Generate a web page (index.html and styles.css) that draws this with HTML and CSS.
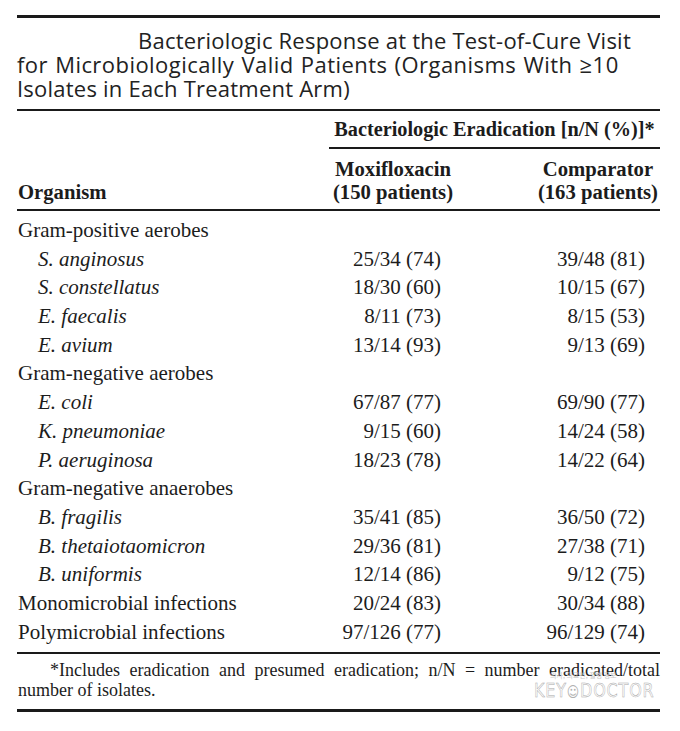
FILE: index.html
```html
<!DOCTYPE html>
<html lang="en">
<head>
<meta charset="utf-8">
<title>Bacteriologic Response</title>
<link rel="stylesheet" href="styles.css">
</head>
<body>
<div class="page">
  <div class="title"><span class="t1">Bacteriologic Response at the Test-of-Cure Visit</span><br><span class="t2">for Microbiologically Valid Patients (Organisms With ≥10</span><br><span class="t3">Isolates in Each Treatment Arm)</span></div>

  <div class="thead">
    <div class="spanner">Bacteriologic Eradication [n/N (%)]*</div>
    <div class="colhead org">Organism</div>
    <div class="colhead c2"><div>Moxifloxacin<br>(150 patients)</div></div>
    <div class="colhead c3"><div>Comparator<br>(163 patients)</div></div>
  </div>

  <div class="tbody">
    <div class="lbl">Gram-positive aerobes</div><div class="num"></div><div class="num n3"></div>
    <div class="lbl sp">S. anginosus</div><div class="num">25/34 (74)</div><div class="num n3">39/48 (81)</div>
    <div class="lbl sp">S. constellatus</div><div class="num">18/30 (60)</div><div class="num n3">10/15 (67)</div>
    <div class="lbl sp">E. faecalis</div><div class="num">8/11 (73)</div><div class="num n3">8/15 (53)</div>
    <div class="lbl sp">E. avium</div><div class="num">13/14 (93)</div><div class="num n3">9/13 (69)</div>
    <div class="lbl">Gram-negative aerobes</div><div class="num"></div><div class="num n3"></div>
    <div class="lbl sp">E. coli</div><div class="num">67/87 (77)</div><div class="num n3">69/90 (77)</div>
    <div class="lbl sp">K. pneumoniae</div><div class="num">9/15 (60)</div><div class="num n3">14/24 (58)</div>
    <div class="lbl sp">P. aeruginosa</div><div class="num">18/23 (78)</div><div class="num n3">14/22 (64)</div>
    <div class="lbl">Gram-negative anaerobes</div><div class="num"></div><div class="num n3"></div>
    <div class="lbl sp">B. fragilis</div><div class="num">35/41 (85)</div><div class="num n3">36/50 (72)</div>
    <div class="lbl sp">B. thetaiotaomicron</div><div class="num">29/36 (81)</div><div class="num n3">27/38 (71)</div>
    <div class="lbl sp">B. uniformis</div><div class="num">12/14 (86)</div><div class="num n3">9/12 (75)</div>
    <div class="lbl">Monomicrobial infections</div><div class="num">20/24 (83)</div><div class="num n3">30/34 (88)</div>
    <div class="lbl">Polymicrobial infections</div><div class="num">97/126 (77)</div><div class="num n3">96/129 (74)</div>
  </div>

  <div class="foot">
    <div class="fn1">*Includes eradication and presumed eradication; n/N = number eradicated/total</div>
    <div class="fn2">number of isolates.</div>
    <div class="wm">
      <div class="wm-ko">의사, 의료인, 질병 정보</div>
      <div class="wm-logo">KEY<span class="wm-face">☺</span>DOCTOR</div>
    </div>
  </div>
</div>
</body>
</html>
```

FILE: styles.css
```css
html, body {
  margin: 0;
  padding: 0;
  background: #ffffff;
}

.page {
  position: relative;
  width: 643px;
  margin: 15px 0 0 17px;
  border-top: 3px solid #1a1a1a;
  color: #1c1c1c;
  font-family: "Liberation Serif", "Times New Roman", serif;
}

.title {
  font-family: "Open Sans", "Liberation Sans", sans-serif;
  font-size: 22px;
  line-height: 24px;
  letter-spacing: 0.22px;
  color: #222;
  text-indent: 121px;
  padding: 10px 0 9px;
  border-bottom: 2px solid #1a1a1a;
  white-space: nowrap;
}

.t2 {
  letter-spacing: 0.45px;
  word-spacing: 1px;
}

.thead {
  display: grid;
  grid-template-columns: 312px 128px 203px;
  border-bottom: 2px solid #1a1a1a;
}

.spanner {
  grid-column: 2 / 4;
  text-align: center;
  font-weight: bold;
  font-size: 20.3px;
  line-height: 24px;
  padding: 6px 0;
  border-bottom: 2px solid #1a1a1a;
}

.colhead {
  font-weight: bold;
  font-size: 20.7px;
  line-height: 23px;
  padding: 9px 0 5px;
}

.org {
  align-self: end;
  padding-left: 1px;
}

.c2 {
  text-align: center;
}

.c3 {
  display: flex;
  justify-content: flex-end;
  text-align: center;
  padding-right: 2px;
}

.tbody {
  display: grid;
  grid-template-columns: 312px 128px 203px;
  grid-auto-rows: 28.7px;
  font-size: 21px;
  line-height: 28.7px;
  padding: 5px 0 6px;
  border-bottom: 2px solid #1a1a1a;
}

.lbl {
  padding-left: 1px;
  white-space: nowrap;
}

.sp {
  font-style: italic;
  padding-left: 21px;
}

.num {
  text-align: right;
  padding-right: 16px;
  white-space: nowrap;
}

.n3 {
  padding-right: 15px;
}

.foot {
  position: relative;
  font-size: 18px;
  line-height: 20px;
  padding: 6px 0 9px;
  border-bottom: 3px solid #1a1a1a;
}

.fn1 {
  padding-left: 33px;
  text-align: justify;
  text-align-last: justify;
  white-space: nowrap;
}

.fn2 {
  padding-left: 1px;
}

.wm {
  position: absolute;
  right: 2px;
  top: 17px;
  width: 124px;
  pointer-events: none;
}

.wm-ko {
  font-family: "Noto Sans CJK KR", sans-serif;
  font-size: 7px;
  line-height: 9px;
  color: #c8c8c8;
  padding-left: 16px;
  white-space: nowrap;
}

.wm-logo {
  font-family: "DejaVu Sans", sans-serif;
  font-weight: normal;
  font-size: 20px;
  line-height: 20px;
  letter-spacing: 1px;
  white-space: nowrap;
  color: #ffffff;
  -webkit-text-stroke: 0.5px #a8a8a8;
  transform: scaleX(0.8);
  transform-origin: left center;
}

.wm-face {
  color: #b0b0b0;
  -webkit-text-stroke: 0;
  font-size: 15px;
}
```
